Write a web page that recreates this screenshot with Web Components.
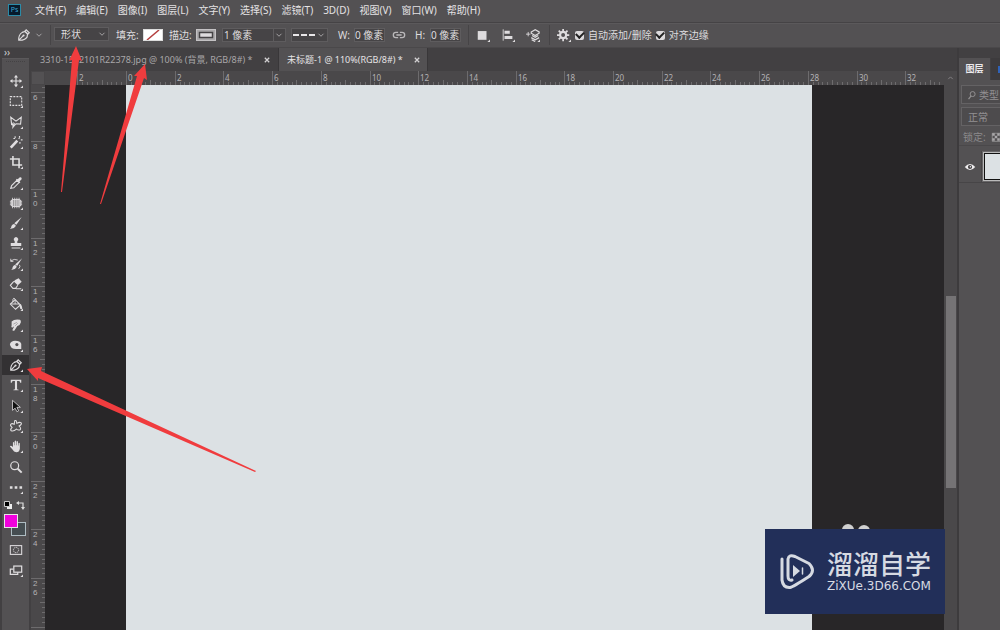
<!DOCTYPE html>
<html lang="zh-CN">
<head>
<meta charset="utf-8">
<title>Photoshop</title>
<style>
html,body{margin:0;height:100%;overflow:hidden;background:#535153}
body{font:10px/14px "Noto Sans","Noto Sans CJK SC",sans-serif;color:#dedcde}
</style>
</head>
<body>
<ps-app></ps-app>
<script>
const BASE = `*{box-sizing:border-box}button,input,select{font:inherit;color:inherit;background:none;border:0;margin:0;padding:0;border-radius:0;appearance:none;outline:0;min-width:0}svg{display:block;flex:none}`;
function define(name, css, html, setup) {
  customElements.define(name, class extends HTMLElement {
    connectedCallback() {
      if (this.shadowRoot) return;
      const root = this.attachShadow({mode: 'open'});
      root.innerHTML = `<style>${BASE}${css}</style>` + (typeof html === 'function' ? html(this) : html);
      if (setup) setup(root, this);
    }
  });
}

const ICONS = {
  move: '<path d="M8 2v12M2 8h12" stroke="currentColor" stroke-width="1.3"/><path d="M8 1 5.6 4h4.8zM8 15l-2.4-3h4.8zM1 8l3-2.4v4.8zM15 8l-3-2.4v4.8z" fill="currentColor"/>',
  marquee: '<rect x="1.500" y="3" width="13" height="10" fill="none" stroke="currentColor" stroke-width="1.3" stroke-dasharray="2.2 1.3"/>',
  lasso: '<path d="M2 2.500l6 4.500 6-4.500-.8 8-5.200-.5-3.500 4 .5-3.500-2 .5z" fill="none" stroke="currentColor" stroke-width="1.3"/><circle cx="5" cy="10.500" r="1.500" fill="none" stroke="currentColor"/>',
  wand: '<path d="M2 14.500 9.500 6.500" stroke="currentColor" stroke-width="3"/><path d="M11 4.500l1-1M7 1.500v2M5 4h2M12 1v2M13.500 5.500h2M12.500 8v2" stroke="currentColor" stroke-width="1.3"/>',
  crop: '<path d="M4.500 1v10.500H12M1 4.500h10.500V15M12 11.500h3" fill="none" stroke="currentColor" stroke-width="1.8"/>',
  dropper: '<path d="M2 14l1-3 6-6 2.500 2.500-6 6z" fill="none" stroke="currentColor" stroke-width="1.3"/><path d="M8 4l1-1 1 .8 2-2q2-1.200 2.500 1 .2 1-1.500 2.400l-1 1 1 1-1 1z" fill="currentColor"/>',
  patch: '<rect x="2.500" y="4" width="11" height="8" rx="2" fill="#9b999b" stroke="currentColor"/><path d="M4 2v12M6.500 2v12M9 2v12M11.500 2v12M1 6h3M1 8h3M1 10h3M12 6h3M12 8h3M12 10h3" stroke="currentColor" stroke-width=".9"/>',
  brush: '<path d="M14.500 1 8.500 10 6 8.200zM5.500 9q2.300 .2 2.300 2.500Q6 15 1 14.500q1.800-1 1.800-3.200 .8-2 2.700-2.300z" fill="currentColor"/>',
  stamp: '<path d="M6.500 8V6Q5 4.500 5.500 3q1-1.800 2.500-1.800T10.500 3Q11 4.500 9.500 6v2H14v3.500H2V8zM3 13h10v1.200H3z" fill="currentColor"/>',
  history: '<path d="M15 1.500 9.500 10 7 8.500zM6.500 9q2.300 .2 2.300 2.400Q7 15 2.500 14.500q1.700-1 1.700-3.200 .8-2 2.300-2.300z" fill="currentColor"/><path d="M2 4.500q4-3 8-1M2 2v3h3M12 9q1.500 2-1 4.500" stroke="currentColor" fill="none"/>',
  eraser: '<path d="M7 3.500 11 1.500l3.500 4-4.500 4-4.500-4.500z" fill="currentColor"/><path d="M5.500 5 1.500 9.500 4.500 13h3L10 9.500M8 13.500h6" fill="none" stroke="currentColor" stroke-width="1.2"/>',
  bucket: '<path d="M7 3l6 6-5.500 5-6-6zM3 8h9" fill="none" stroke="currentColor" stroke-width="1.2"/><path d="M7 8V2.500Q5.500 0 4.500 2.500V6" fill="none" stroke="currentColor"/><path d="M12 7.500q3.500 2 3 6.500-2 .5-2.500-1.500z" fill="currentColor"/>',
  smudge: '<path d="M3 4q3-3 9.500-2 1.500 1 1 3L12 8 9.500 9 6 14.500q-2.500.5-2-1L6 9.500 3.500 11Q2 10 3 8.500z" fill="currentColor"/><path d="M5 7l4-2M7 9l3-3" stroke="#777577" stroke-width=".6"/>',
  sponge: '<path d="M1 7Q2 3 7 3q6 0 7 3.500V12.500h-4Q2 13.500 1 7z" fill="currentColor"/><circle cx="9" cy="7.500" r="1.800" fill="#535153"/>',
  pen: '<path d="M2 14q-.5-6 4-9l3-1 3 3-.5 3.500q-3 4-9.500 3.500zM9 3.500 10.500 2 14 5.500 12.500 7zM2.500 13.500 7 9" fill="none" stroke="currentColor" stroke-width="1.3"/><circle cx="7.500" cy="8.500" r="1.200" fill="currentColor"/>',
  type: '<path d="M2 2h12v3.500h-1.200Q12.500 3.500 11.500 3.500H9.200v9q0 .7 1.800.8V14H5v-.7q1.800-.1 1.800-.8v-9H4.500q-1 0-1.300 2H2z" fill="currentColor"/>',
  select: '<path d="M4 1.500V13l3-2.500 2 4 2-1-2-4h4z" fill="#111" stroke="currentColor" stroke-width=".9"/>',
  shape: '<path d="M6.500 2q1.500-1 2 1l.5 2q3-2 5-.5 1 1.500-2.500 3.500 3 3 1 4.500-2 .6-4-1-3 3-6 2-1.500-1.500 1-4Q1 7.500 2 6q1.500-1.500 4 0z" fill="none" stroke="currentColor" stroke-width="1.2"/>',
  hand: '<path d="M4.500 9V4q.8-1.300 1.500 0v3h.5V2.500Q7.300 1 8.200 2.500V7h.5V3q.8-1.300 1.600 0v4.300h.5V5q.9-1.300 1.600 0v6q-.6 4-4 4-3 0-4.400-3L1 8.500q.7-1.500 2-.5z" fill="currentColor"/>',
  zoom: '<circle cx="6.500" cy="6.500" r="4.500" fill="none" stroke="currentColor" stroke-width="1.400"/><path d="M10 10l4.500 4.500" stroke="currentColor" stroke-width="2.2"/>',
  more: '<path d="M1 7h3v3H1zM6.500 7h3v3h-3zM12 7h3v3h-3z" fill="currentColor"/>',
  mask: '<rect x="1.500" y="3" width="13" height="10" fill="none" stroke="currentColor" stroke-width="1.200"/><circle cx="8" cy="8" r="3" fill="none" stroke="currentColor" stroke-dasharray="1.500 .8"/>',
  screen: '<path d="M5 7H1.500v6H10v-2.500" fill="none" stroke="currentColor" stroke-width="1.400"/><rect x="5.500" y="3.500" width="9" height="7" fill="none" stroke="currentColor" stroke-width="1.400"/>',
  down: '<path d="M4 6l4 4 4-4" fill="none" stroke="currentColor" stroke-width="1.500"/>',
  up: '<path d="M4 10l4-4 4 4" fill="none" stroke="currentColor" stroke-width="1.500"/>',
  link: '<path d="M7 5H4.500a3 3 0 0 0 0 6H7M9 5h2.500a3 3 0 0 1 0 6H9M5 8h6" fill="none" stroke="currentColor" stroke-width="1.500"/>',
  square: '<path d="M2 3.500h10v10H2z" fill="currentColor"/>',
  align: '<path d="M2.500 1.500v13" stroke="currentColor"/><path d="M4 3h6v3.500H4zM4 9h9v3.500H4z" fill="currentColor"/>',
  stack: '<path d="M0 7h5M2.500 4.500v5" stroke="currentColor"/><path d="M6 4.500 10.500 2 15 4.500v1.500l-4.500 2.500L6 6zM7 8.500l3.500 2 3.500-2M6 11l4.500 2.500L15 11M6.500 13.500l4 2" fill="none" stroke="currentColor" stroke-width="1.400"/>',
  gear: '<circle cx="7" cy="8" r="3.500" fill="none" stroke="currentColor" stroke-width="2.500"/><path d="M7 1v3M7 12v3M0 8h3M11 8h3M2 3l2 2M10 11l2 2M2 13l2-2M10 5l2-2" stroke="currentColor" stroke-width="2"/>',
  search: '<circle cx="9" cy="6.500" r="4" fill="none" stroke="currentColor" stroke-width="1.600"/><path d="M6.500 9.500 2.500 14.500" stroke="currentColor" stroke-width="2"/>',
  eye: '<path d="M1 8Q8 0 15 8 8 16 1 8z" fill="currentColor"/><circle cx="8" cy="8" r="2.800" fill="#403e40"/><circle cx="8.500" cy="7.500" r="1" fill="currentColor"/>',
  checker: '<path d="M2 2h13v13H2z" fill="none" stroke="currentColor"/><path d="M2 2h4v4H2zM10 2h4v4h-4zM6 6h4v4H6zM2 10h4v4H2zM10 10h4v4h-4z" fill="currentColor"/>',
  close: '<path d="M4.500 4.500l7 7M11.500 4.500l-7 7" stroke="currentColor" stroke-width="2"/>'
};
define('ps-icon', ':host{display:block;flex:none;width:14px;height:14px}svg{width:100%;height:100%}',
  el => `<svg viewBox="0 0 16 16" aria-hidden="true">${ICONS[el.getAttribute('name')] || ''}${el.hasAttribute('corner') ? '<path d="M16 13v3h-3z" fill="currentColor"/>' : ''}</svg>`);

define('ps-menubar', `:host{display:flex;align-items:center;height:23px;padding:0 8px 3px 8px;background:#535153;border-bottom:1px solid #454345;color:#e4e2e4}
.logo{width:13px;height:12px;background:#071a2b;border:1px solid #2b8ba8;color:#3ba6d4;font-size:7px;line-height:10px;text-align:center;margin-right:14px}
nav{display:flex;gap:10px}button{white-space:nowrap}`,
`<span class="logo">Ps</span><nav>${['文件(F)','编辑(E)','图像(I)','图层(L)','文字(Y)','选择(S)','滤镜(T)','3D(D)','视图(V)','窗口(W)','帮助(H)'].map(t => `<button>${t}</button>`).join('')}</nav>`);

define('ps-options', `:host{display:flex;align-items:center;height:25px;padding:0 0 1px 17px;background:#535153;border-top:1px solid #5b595b;border-bottom:1px solid #4a484a;white-space:nowrap}
.sep{width:1px;height:20px;background:#464446;flex:none}
.box{display:flex;align-items:center;height:14px;background:#464446;border:1px solid #5e5c5e;flex:none}
.box ps-icon,.chev{width:10px;height:10px;margin-right:1px;color:#aaa8aa}
.chev{margin:0 6px 0 3px}
.pick{width:55px;margin:0 7px 2px 3px}.pick select{flex:1;padding-left:6px;height:12px;line-height:12px}
.sw{width:20px;height:12px;background:#fff;border:1px solid #ddd;flex:none}.sw svg{width:18px;height:10px}
.grey{background:#aaa8aa;border-color:#c4c2c4}
.lab{width:27px;flex:none}.lab2{margin-left:6px}
.stroke{width:64px;margin:0 5px 0 6px}.stroke input{width:51px;padding-left:1px;border-right:1px solid #5e5c5e;height:12px}
.dash{width:37px;justify-content:space-between;padding-left:1px}
.num{width:31px;margin:0 7px 0 4px}.num input{width:100%}
.wl{width:12px;margin-left:10px}.hl{width:11px;margin-left:9px}
.check{display:flex;align-items:center;gap:4px;margin-left:4px}
input[type=checkbox]{width:9px;height:9px;background:#dcdadc;border-radius:2px;display:grid;place-items:center;flex:none}
input[type=checkbox]:checked::after{content:"";width:6px;height:4px;border:solid #222;border-width:0 0 2px 2px;transform:rotate(-45deg);margin-bottom:2px}`,
`<ps-icon name="pen"></ps-icon><ps-icon name="down" class="chev"></ps-icon><span class="sep"></span>
<span class="box pick"><select aria-label="工具模式"><option>形状</option></select><ps-icon name="down"></ps-icon></span>
<span class="lab">填充:</span><button class="sw" aria-label="填充"><svg viewBox="0 0 18 10"><path d="M3 10 15 0" stroke="#b54040" stroke-width="1.500"/></svg></button>
<span class="lab lab2">描边:</span><button class="sw grey" aria-label="描边"><svg viewBox="0 0 18 10"><rect x="2.500" y="2.500" width="13" height="5" fill="#dedcde" stroke="#454345" stroke-width="1.500"/></svg></button>
<span class="box stroke"><input aria-label="描边宽度" value="1 像素"><ps-icon name="down"></ps-icon></span>
<button class="box dash" aria-label="描边类型"><svg width="22" height="4"><path d="M0 2h22" stroke="#e8e6e8" stroke-width="2" stroke-dasharray="6 2"/></svg><ps-icon name="down"></ps-icon></button>
<label class="wl" for="w">W:</label><span class="box num"><input id="w" value="0 像素"></span>
<ps-icon name="link" style="color:#bab8ba"></ps-icon>
<label class="hl" for="h">H:</label><span class="box num"><input id="h" value="0 像素"></span>
<span class="sep" style="margin-right:7px"></span><ps-icon name="square" corner></ps-icon>
<ps-icon name="align" corner style="margin:0 11px"></ps-icon><ps-icon name="stack" corner></ps-icon>
<span class="sep" style="margin:0 7px 0 9px"></span><ps-icon name="gear" corner></ps-icon>
<label class="check"><input type="checkbox" checked>自动添加/删除</label><label class="check"><input type="checkbox" checked>对齐边缘</label>`);

const tools = ['move','marquee','lasso','wand','crop','dropper','patch','brush','stamp','history','eraser','bucket','smudge','sponge','pen','type','select','shape','hand','zoom','more'];
define('ps-tools', `:host{display:flex;flex-direction:column;width:31px;flex:none;background:#424042;border-right:1px solid #424042}
header{height:10px;padding-left:4px;font-size:10px;line-height:9px;color:#d0ced0}
main{flex:1;margin:0 1px 0 2px;background:#535153;border-top:1px solid #5b595b}
.grip{height:3px;margin:2px 4px 7px;border-top:1px dotted #444244}
.list{display:grid;grid-auto-rows:1fr;height:426px}
button{display:grid;place-items:center;color:#e0dee0;width:100%}
.list button.on{background:#333133}
.mini{display:flex;justify-content:space-between;margin:4px 4px 4px 2px}
.colors{display:grid;grid-template-columns:7px 7px 8px;grid-template-rows:8px 6px 8px;margin:0 2px 4px}
.fg{grid-area:1/1/3/3;background:#f000dc;border:1px solid #e6e4e6;z-index:1}.bg{grid-area:2/2/4/4;background:#454d51;border:1px solid #aebcc2}
.tail{height:20px}`,
`<header>››</header><main><div class="grip"></div><div class="list">${tools.map(t => `<button aria-label="${t}" class="${t === 'pen' ? 'on' : ''}"><ps-icon name="${t}" ${t === 'zoom' ? '' : 'corner'}></ps-icon></button>`).join('')}</div>
<div class="mini"><svg width="9" height="9"><path d="M3 3h5v5H3z" fill="#eee"/><path d="M.5.500h5v5h-5z" fill="#000" stroke="#ccc"/></svg><svg width="9" height="9"><path d="M2 2h5v5" fill="none" stroke="#ddd" stroke-width="1.200"/><path d="M0 2l3-2v4zM7 9 5 6h4z" fill="#ddd"/></svg></div>
<div class="colors"><button class="fg" aria-label="前景色"></button><button class="bg" aria-label="背景色"></button></div>
<button class="tail" aria-label="mask"><ps-icon name="mask"></ps-icon></button><button class="tail" aria-label="screen"><ps-icon name="screen" corner></ps-icon></button></main>`);

define('ps-tabs', `:host{display:flex;height:23px;background:#424042;font-size:9px}
.tab{display:flex;align-items:center;justify-content:space-between;gap:5px;padding:0 6px 0 9px;min-width:248px;white-space:nowrap;color:#a9a7a9;border-right:1px solid #393739}
.tab.on{background:#535153;color:#e6e4e6;padding:0 5px 0 8px;min-width:149px}ps-icon{width:10px;height:10px;color:#d4d2d4}`,
`<div class="tab"><span>3310-1502101R22378.jpg @ 100% (背景, RGB/8#) *</span><ps-icon name="close"></ps-icon></div><div class="tab on"><span>未标题-1 @ 110%(RGB/8#) *</span><ps-icon name="close"></ps-icon></div>`);

// Two units span `step` pixels; `origin` is where `first` falls on the ruler.
define('ps-ruler', `:host{display:block;overflow:hidden;min-width:0;min-height:0;background:#4a484a;color:#b4b2b4}svg{width:100%;height:100%}text{font:8px "Noto Sans",sans-serif;fill:currentColor}.v text{font-family:"Liberation Sans",sans-serif}`,
'<svg></svg>',
(root, el) => {
  const vertical = el.hasAttribute('vertical'), svg = root.querySelector('svg');
  const origin = +el.getAttribute('origin'), step = +el.getAttribute('step'), first = +el.getAttribute('first');
  if (vertical) svg.setAttribute('class', 'v');
  const draw = () => {
    const size = vertical ? el.clientHeight : el.clientWidth;
    let s = '', d = '';
    for (let i = -1; origin + i * step < size; i++) {
      const p = origin + i * step, a = Math.round(p) + .5, n = String(Math.abs(first + 2 * i));
      d += vertical ? `M0 ${a}h14` : `M${a} 0v14`;
      for (let k = 1; k < 10; k++) {
        const q = Math.round(p + k * step / 10) + .5, l = k === 5 ? 5 : 3;
        d += vertical ? `M${14 - l} ${q}h${l}` : `M${q} ${14 - l}v${l}`;
      }
      if (p < 0 || p + 18 > size) continue;
      if (vertical) n.split('').forEach((c, j) => s += `<text x="2" y="${Math.round(p) + 8 + j * 9}">${c}</text>`);
      else s += `<text x="${Math.round(p) + 2}" y="10">${n}</text>`;
    }
    svg.innerHTML = `<path d="${d}" stroke="#6d6b6d" fill="none"/>${s}`;
  };
  new ResizeObserver(draw).observe(el);
});

define('ps-document', `:host{display:flex;flex-direction:column;flex:1;min-width:0;background:#424042}
.work{flex:1;min-height:0;display:grid;grid-template-columns:14px 1fr 13px;grid-template-rows:14px 1fr}
.corner{background:#535153;border:1px solid #484648}
.stage{background:#282628;display:flex;padding:0 132px 0 81px;min-height:0}.paper{flex:1;background:#dce1e4}
.bar{background:#4a484a;display:flex;flex-direction:column;grid-row:1/3;grid-column:3;align-items:center}
.bar ps-icon{width:9px;height:14px;color:#8c8a8c}.track{flex:1;width:10px;display:grid;grid-template-rows:211fr 192fr 142fr}
.thumb{grid-row:2;background:#757375}`,
`<ps-tabs></ps-tabs><div class="work"><div class="corner"></div><ps-ruler origin="81" step="48.7" first="0"></ps-ruler>
<ps-ruler vertical origin="7" step="48.6" first="6"></ps-ruler><div class="stage"><div class="paper"></div></div>
<div class="bar"><ps-icon name="up"></ps-icon><div class="track"><div class="thumb"></div></div></div></div>`);

define('ps-layers', `:host{display:flex;flex-direction:column;width:43px;flex:none;overflow:hidden;background:#424042;border-left:2px solid #3d3b3d;padding:10px 0 0 0;white-space:nowrap}
.tabs{display:flex;height:22px;gap:1px}.tabs button{width:31px;background:#535153;font-weight:700;font-size:9px;flex:none;color:#eceaec}.tabs button+button{flex:1;width:auto;background:#3d3b3d;display:grid;place-items:center end}
.tabs i{width:2px;height:7px;background:#2f62b8}
main{flex:1;background:#535153;padding-top:5px}
.field{display:flex;align-items:center;gap:2px;height:19px;margin:0 0 3px 2px;padding-left:5px;border:1px solid #646264;border-right:0;color:#929092;background:#4d4b4d}
.field ps-icon{width:10px;height:10px}.field select{padding-left:1px;width:30px}
.lock{display:flex;align-items:center;height:17px;padding-left:4px;gap:5px;color:#8c8a8c;border-bottom:1px solid #4a484a}
.lock ps-icon{width:10px;height:10px;color:#aaa8aa}
.layer{display:flex;height:32px;margin-top:5px;border-bottom:1px solid #474547}
.vis{width:23px;display:grid;place-items:center;border-right:1px solid #474547;flex:none}.vis ps-icon{width:12px;height:12px;color:#f0eef0}
.row{flex:1;background:#6a686a;padding:2px 0 2px 2px}.thumb{height:27px;width:40px;background:#dce1e4;border:1px solid #111;outline:1px solid #bbb}`,
`<div class="tabs"><button>图层</button><button aria-label="通道"><i></i></button></div><main>
<div class="field"><ps-icon name="search"></ps-icon>类型</div><div class="field"><select aria-label="混合模式"><option>正常</option></select></div>
<div class="lock"><span>锁定:</span><ps-icon name="checker"></ps-icon></div>
<div class="layer"><button class="vis" aria-label="可见性"><ps-icon name="eye"></ps-icon></button><div class="row"><div class="thumb"></div></div></div></main>`);

define('ps-watermark', `:host{position:absolute;right:55px;bottom:16px;width:180px;height:85px;background:#222f59;color:#d6dae2;display:flex;align-items:center;gap:11px;padding-left:15px}
.ears{position:absolute;left:76px;top:-5px}
.words{display:flex;flex-direction:column}.name{font:500 26px/28px "Noto Sans CJK SC",sans-serif}.site{font:12px/14px "DejaVu Sans",sans-serif}
.words{gap:2px;padding-bottom:2px}`,
`<svg class="ears" width="32" height="5"><circle cx="7" cy="6" r="6" fill="#d0d0d0"/><circle cx="23" cy="7" r="6" fill="#d0d0d0"/></svg>
<svg width="36" height="38" viewBox="0 0 36 38" fill="none" stroke="currentColor" stroke-width="3" stroke-linecap="round" stroke-linejoin="round"><path d="M2 6v21q1 8 8 7.500 3-.5 19-11 7-6 0-13L15 3.500Q9 1 8 6v17q0 5 4 4"/><path d="M13 12v12l7-6z" fill="currentColor" stroke="none"/><path d="M22.500 15v6" stroke-width="1.500"/></svg>
<div class="words"><span class="name">溜溜自学</span><span class="site">ZiXUe.3D66.COM</span></div>`);

define('ps-arrows', `:host{position:absolute;inset:0;pointer-events:none}svg{width:100%;height:100%}`,
`<svg fill="#f03c3e"><path d="M76 46 82 61 79 60 62 192 61 192 72 60 69 61z"/><path d="M145 64 147 80 144 78 101 204 100 204 137 76 134 76z"/><path d="M27 369 42 367 41 371 256 471 255 472 38 378 38 381z"/></svg>`);

define('ps-app', `:host{display:flex;flex-direction:column;height:100vh;position:relative;overflow:hidden}.body{flex:1;display:flex;min-height:0}`,
`<ps-menubar></ps-menubar><ps-options></ps-options><div class="body"><ps-tools></ps-tools><ps-document></ps-document><ps-layers></ps-layers></div><ps-watermark></ps-watermark><ps-arrows></ps-arrows>`);
</script>
</body>
</html>
